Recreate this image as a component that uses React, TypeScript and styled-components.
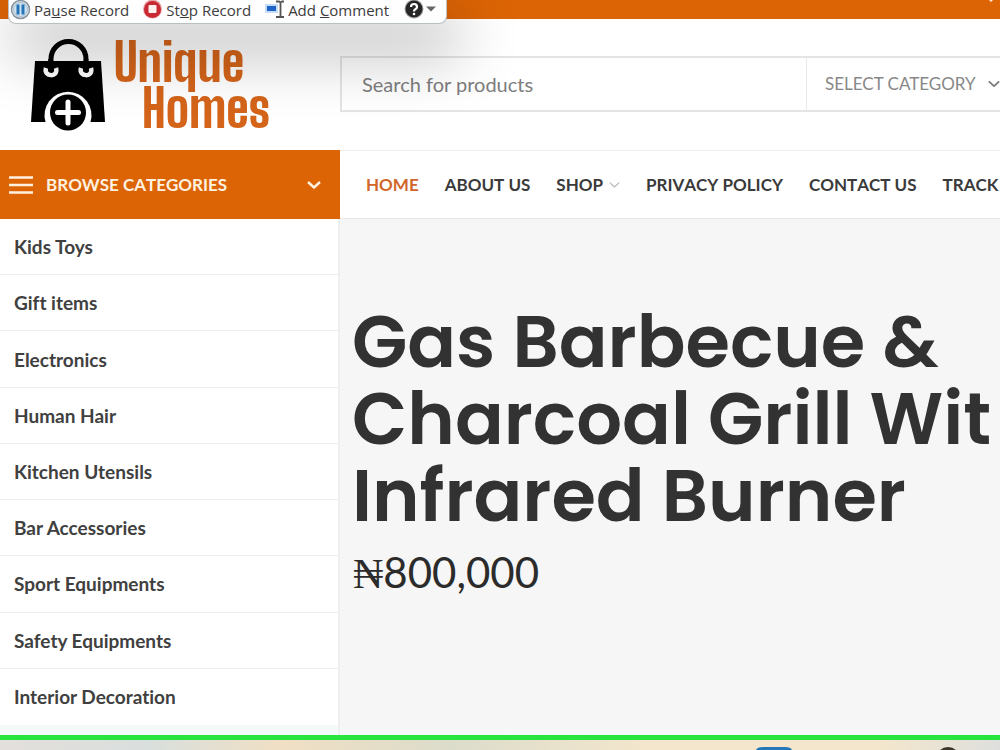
import React from 'react';
import styled, { createGlobalStyle } from 'styled-components';

const orange = '#dc6405';
const ink = '#333333';
const line = '#eeeeee';

const GlobalStyle = createGlobalStyle`
  *, *::before, *::after { box-sizing: border-box; }
  body { margin: 0; background: #fff; color: ${ink}; font-family: Lato, "Liberation Sans", sans-serif; overflow-x: hidden; }
  button, input, select { font: inherit; color: inherit; }
  a { color: inherit; text-decoration: none; }
`;

const Page = styled.div`
  position: relative;
  min-height: 100vh;
  display: flex;
  flex-direction: column;
  overflow: hidden;
`;

const Recorder = styled.div`
  position: absolute;
  z-index: 2;
  top: 0;
  left: 8px;
  height: 24px;
  display: flex;
  align-items: flex-start;
  gap: 13px;
  padding: 0 10px 0 1px;
  background: #fefefe;
  border: 1px solid #b9c0c2;
  border-top: 0;
  border-radius: 0 0 8px 8px;
  box-shadow: 8px 24px 60px 6px rgba(0, 0, 0, 0.3);
`;

const RecorderButton = styled.button`
  display: flex;
  align-items: center;
  gap: 3px;
  height: 20px;
  padding: 0;
  border: 0;
  background: none;
  color: #3c3c3c;
  font: 15px/20px "Open Sans", "Noto Sans", sans-serif;
  white-space: nowrap;
  svg { flex: none; display: block; }
`;

const TopBar = styled.div`
  position: relative;
  z-index: 1;
  flex: none;
  height: 19px;
  display: flex;
  justify-content: flex-end;
  padding-right: 6px;
  background: ${orange};
`;

const Header = styled.header`
  flex: none;
  display: flex;
  align-items: center;
  height: 131px;
  overflow: hidden;
`;

const Logo = styled.a`
  flex: none;
  width: 340px;
  display: flex;
  align-items: center;
  gap: 8px;
  padding-left: 30px;
`;

const LogoText = styled.span`
  display: flex;
  flex-direction: column;
  color: #d4641a;
  font: 800 52px/46px "Big Shoulders Display", "Liberation Sans Narrow", sans-serif;
  span + span { padding-left: 28px; }
`;

const Search = styled.form`
  flex: 1;
  display: flex;
  height: 56px;
  min-width: 0;
  margin-bottom: 2px;
  border: 2px solid #e4e4e4;
  border-right: 0;
  color: #777;
`;

const SearchInput = styled.input`
  flex: 1;
  min-width: 0;
  padding: 0 20px;
  border: 0;
  outline: 0;
  background: transparent;
  font-size: 20px;
  &::placeholder { color: #7d7d7d; opacity: 1; }
`;

const Category = styled.label`
  position: relative;
  display: flex;
  align-items: center;
  width: 194px;
  border-left: 1px solid #e8e8e8;
  svg { position: absolute; right: 0; pointer-events: none; }
`;

const CategorySelect = styled.select`
  appearance: none;
  width: 100%;
  height: 100%;
  padding: 0 0 0 18px;
  border: 0;
  outline: 0;
  background: transparent;
  color: #888;
  font-size: 17px;
`;

const NavRow = styled.div`
  flex: none;
  display: flex;
  height: 69px;
  overflow: hidden;
`;

const Browse = styled.button`
  position: relative;
  z-index: 3;
  flex: none;
  width: 340px;
  display: flex;
  align-items: center;
  gap: 13px;
  padding: 0 19px 0 9px;
  border: 0;
  background: ${orange};
  color: #fff1e0;
  font-weight: 700;
  font-size: 17px;
  font-kerning: none;
  span { flex: 1; text-align: left; }
`;

const Nav = styled.nav`
  flex: 1;
  min-width: 0;
  display: flex;
  align-items: center;
  gap: 26px;
  padding-left: 26px;
  border-top: 1px solid ${line};
  border-bottom: 1px solid #e6e6e6;
  font-kerning: none;
  white-space: nowrap;
  overflow: hidden;
`;

const NavLink = styled.a<{ $active?: boolean }>`
  display: flex;
  align-items: center;
  gap: 6px;
  color: ${p => (p.$active ? '#d2662a' : '#3a3a3a')};
  font-weight: 700;
  font-size: 17px;
`;

const Main = styled.main`
  flex: 1;
  display: flex;
  min-height: 0;
`;

const Menu = styled.ul`
  flex: none;
  width: 340px;
  display: grid;
  grid-auto-rows: 1fr;
  margin: 0;
  padding: 0 0 10px;
  border-right: 2px solid #efefef;
  list-style: none;
  background: linear-gradient(to top, #f3faf7 10px, #fff 10px);
`;

const MenuItem = styled.li`
  display: flex;
  align-items: center;
  min-height: 40px;
  padding: 0 14px;
  border-bottom: 1px solid ${line};
  color: #404040;
  font-weight: 700;
  font-size: 19px;
  font-variant-ligatures: none;
  &:last-child { border-bottom: 0; }
`;

const Hero = styled.section`
  flex: 1;
  min-width: 0;
  padding: 84px 0 0 12px;
  background: linear-gradient(to top, #f4faf8, #f6f6f6 10px);
  white-space: nowrap;
  overflow: hidden;
`;

const Title = styled.h1`
  margin: 0;
  color: #323232;
  font: 600 72px/77px Poppins, Inter, sans-serif;
`;

const Price = styled.p`
  margin: 12px 0 0;
  padding-left: 1px;
  color: #2b2b2b;
  font-size: 42px;
  line-height: 52px;
`;

const Naira = styled.span`
  font-family: "Liberation Serif", serif;
`;

const Frame = styled.div`
  flex: none;
  height: 5px;
  background: #27e43f;
`;

const Taskbar = styled.footer`
  flex: none;
  height: 10px;
  display: flex;
  justify-content: flex-end;
  gap: 145px;
  padding: 0 41px 0 0;
  background: linear-gradient(90deg, #e3dfdc, #d9dfdd 15%, #f0dfc4 28%, #dcdccb 45%, #f3e6cc 65%, #f3e6cc 88%, #dedfdd);
  svg { display: block; }
`;

const Chevron = ({ width, color, stroke }: { width: number; color: string; stroke: number }) => (
  <svg width={width} height="8" viewBox="0 0 14 8" fill="none" stroke={color} strokeWidth={stroke}>
    <path d="M1 1L7 6.500L13 1" strokeLinejoin="round" />
  </svg>
);

const categories = [
  'Kids Toys', 'Gift items', 'Electronics', 'Human Hair', 'Kitchen Utensils',
  'Bar Accessories', 'Sport Equipments', 'Safety Equipments', 'Interior Decoration',
];

export default function App() {
  return (
    <>
      <GlobalStyle />
      <Page>
        <Recorder>
          <RecorderButton>
            <svg width="21" height="20" viewBox="0 0 21 20">
              <circle cx="10.500" cy="9.500" r="9" fill="#e2e9ef" stroke="#8794a0" strokeWidth="1.500" />
              <circle cx="10.500" cy="9.500" r="7" fill="#cfe2f2" stroke="#a7bccd" />
              <path d="M6.500 4.500h3v10h-3zM11.500 4.500h3v10h-3z" fill="#2674b8" />
            </svg>
            <span>Pa<u>u</u>se Record</span>
          </RecorderButton>
          <RecorderButton>
            <svg width="21" height="20" viewBox="0 0 21 20">
              <circle cx="10.500" cy="9" r="9.500" fill="#e7a3a5" />
              <circle cx="10.500" cy="9.500" r="8.500" fill="#c92933" />
              <rect x="6.500" y="5" width="8" height="8" rx="1" fill="#fff1ee" />
            </svg>
            <span>St<u>o</u>p Record</span>
          </RecorderButton>
          <RecorderButton>
            <svg width="21" height="20" viewBox="0 0 21 20">
              <rect x="1" y="4" width="13" height="9" fill="#c4dcf5" />
              <rect x="3" y="6" width="9" height="5" fill="#1f62c8" />
              <path d="M12 1.500h3l1.500 1 1.500-1h2M16.500 2v14M12 17h3l1.500-1 1.500 1h2" fill="none" stroke="#555" strokeWidth="1.800" />
            </svg>
            <span>Add <u>C</u>omment</span>
          </RecorderButton>
          <RecorderButton aria-label="Help">
            <svg width="34" height="20" viewBox="0 0 34 20">
              <circle cx="12" cy="9" r="9.500" fill="#aaa" />
              <circle cx="12" cy="9" r="8.500" fill="#262626" />
              <path d="M9 7Q9 4 12 4T15 7Q15 8.500 13 9.500Q12 10 12 11.500" fill="none" stroke="#fff" strokeWidth="2.200" />
              <circle cx="12" cy="14" r="1.300" fill="#fff" />
              <path d="M24 6.500h10l-5 5z" fill="#666" />
            </svg>
          </RecorderButton>
        </Recorder>

        <TopBar>
          <svg width="6" height="3" viewBox="0 0 6 3"><path d="M1 0h4L3 2z" fill="#ffe4cf" /></svg>
        </TopBar>

        <Header>
          <Logo href="#" aria-label="Unique Homes">
            <svg width="76" height="92" viewBox="0 0 76 92">
              <path d="M5 22H71L75 83H1Z" fill="#000" />
              <path d="M21 31V20a17.500 17.500 0 0 1 35 0V31" fill="none" stroke="#000" strokeWidth="5" />
              <path d="M16 29C13 38 29 39 26 29M51 29C48 38 64 39 61 29" fill="none" stroke="#fff" strokeWidth="4.500" />
              <path d="M20.500 20v12M56 20v12" stroke="#000" strokeWidth="4.500" />
              <path d="M15.500 83A23.500 23.500 0 1 1 60.500 83Z" fill="#fff" />
              <circle cx="38" cy="73.500" r="18" fill="#000" />
              <path d="M38 63v21M27.500 73.500h21" stroke="#fff" strokeWidth="5" strokeLinecap="round" />
            </svg>
            <LogoText><span>Unique</span><span>Homes</span></LogoText>
          </Logo>
          <Search>
            <SearchInput type="text" placeholder="Search for products" aria-label="Search for products" />
            <Category>
              <CategorySelect aria-label="Category">
                <option>SELECT CATEGORY</option>
              </CategorySelect>
              <Chevron width={12} color="#777" stroke={2} />
            </Category>
          </Search>
        </Header>

        <NavRow>
          <Browse>
            <svg width="24" height="18" viewBox="0 0 24 18" stroke="#fff1e0" strokeWidth="2.400">
              <path d="M0 1.500h24M0 9h24M0 16.500h24" />
            </svg>
            <span>BROWSE CATEGORIES</span>
            <Chevron width={14} color="#fff1e0" stroke={2.4} />
          </Browse>
          <Nav>
            <NavLink href="#" $active>HOME</NavLink>
            <NavLink href="#">ABOUT US</NavLink>
            <NavLink href="#">SHOP <Chevron width={11} color="#bbb" stroke={1.6} /></NavLink>
            <NavLink href="#">PRIVACY POLICY</NavLink>
            <NavLink href="#">CONTACT US</NavLink>
            <NavLink href="#">TRACK</NavLink>
          </Nav>
        </NavRow>

        <Main>
          <Menu>
            {categories.map(name => (
              <MenuItem key={name}><a href="#">{name}</a></MenuItem>
            ))}
          </Menu>
          <Hero>
            <Title>Gas Barbecue &amp;<br />Charcoal Grill Wit<br />Infrared Burner</Title>
            <Price><Naira>₦</Naira>800,000</Price>
          </Hero>
        </Main>

        <Frame />
        <Taskbar>
          <svg width="36" height="10" viewBox="0 0 36 10">
            <path d="M0 10Q1 7 7 7H29Q35 7 36 10Z" fill="#2377b8" />
          </svg>
          <svg width="22" height="10" viewBox="0 0 22 10">
            <circle cx="11" cy="19" r="12" fill="#3a3528" />
          </svg>
        </Taskbar>
      </Page>
    </>
  );
}
